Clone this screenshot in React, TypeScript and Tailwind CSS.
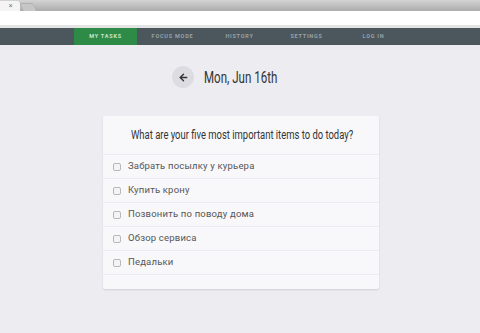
import { ArrowLeft } from 'lucide-react';

const tasks = [
  'Забрать посылку у курьера',
  'Купить крону',
  'Позвонить по поводу дома',
  'Обзор сервиса',
  'Педальки',
];

const nav = ['MY TASKS', 'FOCUS MODE', 'HISTORY', 'SETTINGS', 'LOG IN'];

export default function App() {
  return (
    <div className="w-[480px] h-[333px] overflow-hidden bg-[#ececf1] font-['Roboto',sans-serif]">
      {/* browser chrome */}
      <div className="h-[11px] bg-gradient-to-b from-[#d4d4d4] to-[#acacac] flex items-end">
        <div className="h-[10px] w-[20px] bg-[#f4f4f4] rounded-tr-[3px] flex items-center justify-center text-[7px] leading-none text-[#777] pl-[1px]">×</div>
        <div className="h-[8px] w-[14px] ml-[1px] bg-[#c6c6c6] border border-b-0 border-[#b0b0b0] rounded-t-[2px] skew-x-[25deg]" />
      </div>
      <div className="h-[14px] bg-white" />
      <div className="h-[3px] bg-[#e4e4e4]" />

      <div className="h-[17px] bg-[#4b565d] flex pl-[74px] gap-[4px]">
        {nav.map((n, i) => (
          <div
            key={n}
            className={`w-[63px] flex items-center justify-center text-[5.5px] font-bold tracking-[0.14em] ${i === 0 ? 'bg-[#2e8a47] text-[#c8e6cf]' : 'text-[#98a2a8]'}`}
          >
            {n}
          </div>
        ))}
      </div>

      <div className="flex justify-center mt-[21px] pl-[2px]">
        <div className="relative w-[74px] h-[22px] flex items-center">
          <div className="absolute right-full mr-[10px] top-0 w-[22px] h-[22px] rounded-full bg-[#dcdce2] flex items-center justify-center">
            <ArrowLeft size={11} strokeWidth={3} className="text-[#333]" />
          </div>
          <span className="whitespace-nowrap text-[17px] leading-none text-[#333] scale-x-[0.68] origin-left inline-block">
            Mon, Jun 16th
          </span>
        </div>
      </div>

      <div className="mt-[28px] w-[276px] ml-[103px] bg-[#f8f8fb] rounded-[2px] shadow-[0_1px_2px_rgba(0,0,0,0.12)] pb-[14px]">
        <div className="h-[39px] flex items-center justify-center border-b border-[#ececf0]">
          <div className="w-[220px] flex">
            <span className="whitespace-nowrap text-[12.5px] text-[#333] scale-x-[0.755] origin-left inline-block">
              What are your five most important items to do today?
            </span>
          </div>
        </div>
        {tasks.map((t) => (
          <div key={t} className="h-[24px] flex items-center pl-[10px] border-b border-[#ececf0] gap-[7px]">
            <div className="w-[8px] h-[8px] rounded-[2px] border border-[#b8b8bc] bg-[#f4f4f6]" />
            <span className="text-[9.5px] text-[#555] tracking-[0.02em]">{t}</span>
          </div>
        ))}
      </div>
    </div>
  );
}
